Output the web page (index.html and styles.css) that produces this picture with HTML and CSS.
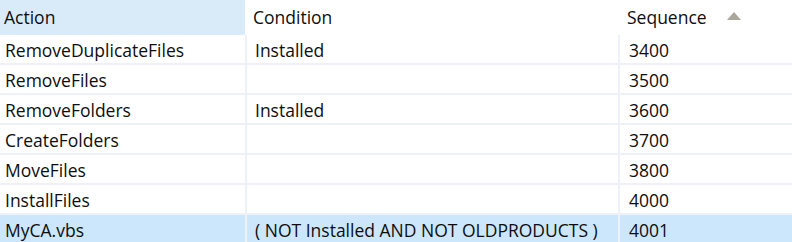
FILE: index.html
```html
<!DOCTYPE html>
<html>
<head>
<meta charset="utf-8">
<link rel="stylesheet" href="styles.css">
</head>
<body>
<div class="header">
  <div class="hdr hdr-active">Action</div>
  <div class="hdr">Condition</div>
  <div class="hdr hdr-sort">Sequence <span class="arrow"></span></div>
</div>
<div class="grid">
  <div class="row"><div class="cell">RemoveDuplicateFiles</div><div class="cell">Installed</div><div class="cell">3400</div></div>
  <div class="row"><div class="cell">RemoveFiles</div><div class="cell"></div><div class="cell">3500</div></div>
  <div class="row"><div class="cell">RemoveFolders</div><div class="cell">Installed</div><div class="cell">3600</div></div>
  <div class="row"><div class="cell">CreateFolders</div><div class="cell"></div><div class="cell">3700</div></div>
  <div class="row"><div class="cell">MoveFiles</div><div class="cell"></div><div class="cell">3800</div></div>
  <div class="row"><div class="cell">InstallFiles</div><div class="cell"></div><div class="cell">4000</div></div>
  <div class="row selected"><div class="cell">MyCA.vbs</div><div class="cell">( NOT Installed AND NOT OLDPRODUCTS )</div><div class="cell">4001</div></div>
</div>
</body>
</html>
```
FILE: styles.css
```css
html, body {
  margin: 0;
  padding: 0;
  background: #ffffff;
}
body {
  font-family: "Open Sans", "Noto Sans", sans-serif;
  font-size: 17.5px;
  color: #0e0e0e;
  width: 792px;
  height: 242px;
  overflow: hidden;
}
.header {
  display: grid;
  grid-template-columns: 245px 373px 174px;
  height: 35px;
}
.hdr {
  height: 35px;
  line-height: 35px;
  background: #ffffff;
  display: flex;
  align-items: center;
  padding-left: 4px;
}
.hdr:nth-child(2) { padding-left: 8px; }
.hdr:nth-child(3) { padding-left: 9px; }
.hdr-active {
  background: #d9ebf9;
}
.hdr-sort .arrow {
  width: 0;
  height: 0;
  border-left: 7.5px solid transparent;
  border-right: 7.5px solid transparent;
  border-bottom: 8px solid #aaa69c;
  margin-left: 20px;
  margin-top: -3px;
}
.grid {
  display: grid;
  grid-template-columns: 245px 371px 174px;
  column-gap: 2px;
  background: #eef2f8;
}
.row {
  display: contents;
}
.cell {
  height: 28px;
  line-height: 30px;
  padding-left: 5px;
  background: #ffffff;
  margin-bottom: 2px;
  white-space: nowrap;
}
.cell:nth-child(2) { padding-left: 8px; }
.cell:nth-child(3) { padding-left: 9px; }
.selected .cell {
  background: #cce6fc;
}
```
